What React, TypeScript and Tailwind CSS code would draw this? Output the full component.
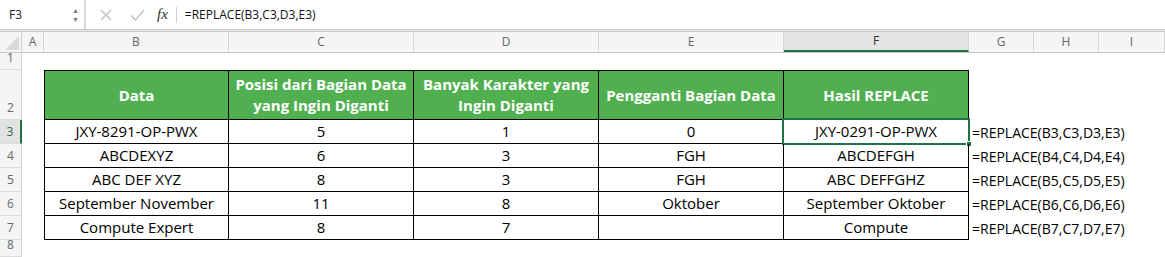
import React from "react";

const cols = ["A", "B", "C", "D", "E", "F", "G", "H", "I"];
const widths = [22, 185, 185, 185, 185, 185, 65, 65, 66];

const data: string[][] = [
  ["JXY-8291-OP-PWX", "5", "1", "0", "JXY-0291-OP-PWX"],
  ["ABCDEXYZ", "6", "3", "FGH", "ABCDEFGH"],
  ["ABC DEF XYZ", "8", "3", "FGH", "ABC DEFFGHZ"],
  ["September November", "11", "8", "Oktober", "September Oktober"],
  ["Compute Expert", "8", "7", "", "Compute"],
];

const headers = [
  "Data",
  "Posisi dari Bagian Data yang Ingin Diganti",
  "Banyak Karakter yang Ingin Diganti",
  "Pengganti Bagian Data",
  "Hasil REPLACE",
];

const font = { fontFamily: "'Open Sans', Lato, sans-serif" };

function RowHead({ n, h, active }: { n: number; h: number; active?: boolean }) {
  return (
    <div
      className={`w-[22px] shrink-0 flex items-end justify-center pb-[2px] text-[12px] border-b border-[#dcdcdc] ${
        active
          ? "bg-[#e2e2e2] text-[#217346] border-r-2 border-r-[#217346]"
          : "bg-[#f5f5f5] text-[#666] border-r border-r-[#cfcfcf]"
      }`}
      style={{ height: h }}
    >
      {n}
    </div>
  );
}

export default function App() {
  return (
    <div className="w-[1165px] h-[257px] overflow-hidden bg-white text-black" style={font}>
      {/* Formula bar */}
      <div className="h-[30px] flex items-stretch bg-white border-b border-[#c8c8c8]">
        <div className="w-[84px] flex items-center justify-between pl-[9px] pr-[5px] text-[12px] text-[#222]">
          <span>F3</span>
          <div className="flex flex-col items-center leading-none text-[#777] text-[7px] gap-[2px]">
            <span>▲</span>
            <span>▼</span>
          </div>
        </div>
        <div className="w-[2px] bg-[#d9d9d9]" />
        <div className="flex items-center pl-[14px] gap-[18px] text-[#c2c2c2]">
          <svg width="12" height="12" viewBox="0 0 12 12">
            <path d="M1 1L11 11M11 1L1 11" stroke="#c4c4c4" strokeWidth="1.5" />
          </svg>
          <svg width="15" height="12" viewBox="0 0 15 12">
            <path d="M1 6.5L5.5 11L14 1" stroke="#c4c4c4" strokeWidth="1.5" fill="none" />
          </svg>
        </div>
        <div
          className="flex items-center pl-[12px] text-[15px] italic text-[#333]"
          style={{ fontFamily: "'Liberation Serif', serif" }}
        >
          fx
        </div>
        <div className="flex items-center pl-[8px]">
          <div className="w-px h-[16px] bg-[#d0d0d0]" />
        </div>
        <div className="flex items-center pl-[8px] text-[12px] text-[#111]">=REPLACE(B3,C3,D3,E3)</div>
      </div>
      <div className="h-px bg-[#e8e8e8]" />
      {/* Column headers */}
      <div className="flex h-[22px] bg-[#f5f5f5] border-t border-[#c8c8c8] border-b border-b-[#c8c8c8]">
        <div className="w-[22px] shrink-0 border-r border-[#cfcfcf] relative overflow-hidden">
          <svg className="absolute right-[2px] bottom-[2px]" width="14" height="14" viewBox="0 0 14 14">
            <path d="M14 0L14 14L0 14Z" fill="#dadada" />
          </svg>
        </div>
        {cols.map((c, i) => (
          <div
            key={c}
            className={`shrink-0 flex items-center justify-center text-[12px] border-r border-[#d6d6d6] ${
              c === "F" ? "bg-[#e4e4e4] border-b-2 border-b-[#217346] text-[#333]" : "text-[#666]"
            }`}
            style={{ width: widths[i] }}
          >
            {c}
          </div>
        ))}
      </div>
      {/* Row 1 */}
      <div className="flex">
        <RowHead n={1} h={17} />
        <div className="flex-1" />
      </div>
      {/* Row 2 header row */}
      <div className="flex">
        <RowHead n={2} h={50} />
        <div className="w-[22px] shrink-0" />
        {headers.map((h, i) => (
          <div
            key={i}
            className={`w-[185px] h-[50px] shrink-0 flex items-center justify-center text-center bg-[#50b050] text-white font-bold text-[15px] leading-[21px] px-[1px] whitespace-nowrap border-t border-b border-r border-black ${
              i === 0 ? "border-l" : ""
            }`}
          >
            {i === 1 ? (
              <span>
                Posisi dari Bagian Data
                <br />
                yang Ingin Diganti
              </span>
            ) : i === 2 ? (
              <span>
                Banyak Karakter yang
                <br />
                Ingin Diganti
              </span>
            ) : (
              h
            )}
          </div>
        ))}
      </div>
      {data.map((row, r) => (
        <div className="flex" key={r}>
          <RowHead n={r + 3} h={24} active={r === 0} />
          <div className="w-[22px] shrink-0" />
          {row.map((v, i) => (
            <div
              key={i}
              className={`w-[185px] h-[24px] shrink-0 flex items-center justify-center text-[15px] border-b border-r border-black relative ${
                i === 0 ? "border-l" : ""
              }`}
            >
              {v}
              {r === 0 && i === 4 && (
                <div className="absolute left-[-2px] top-[-2px] right-[-2px] bottom-[-2px] border-2 border-[#217346]">
                  <div className="absolute right-[-4px] bottom-[-4px] w-[6px] h-[6px] bg-[#217346] border border-white" />
                </div>
              )}
            </div>
          ))}
          <div className="h-[24px] flex items-center pl-[3px] text-[14px] whitespace-nowrap">
            =REPLACE(B{r + 3},C{r + 3},D{r + 3},E{r + 3})
          </div>
        </div>
      ))}
      <div className="flex">
        <RowHead n={8} h={17} />
        <div className="flex-1" />
      </div>
    </div>
  );
}
